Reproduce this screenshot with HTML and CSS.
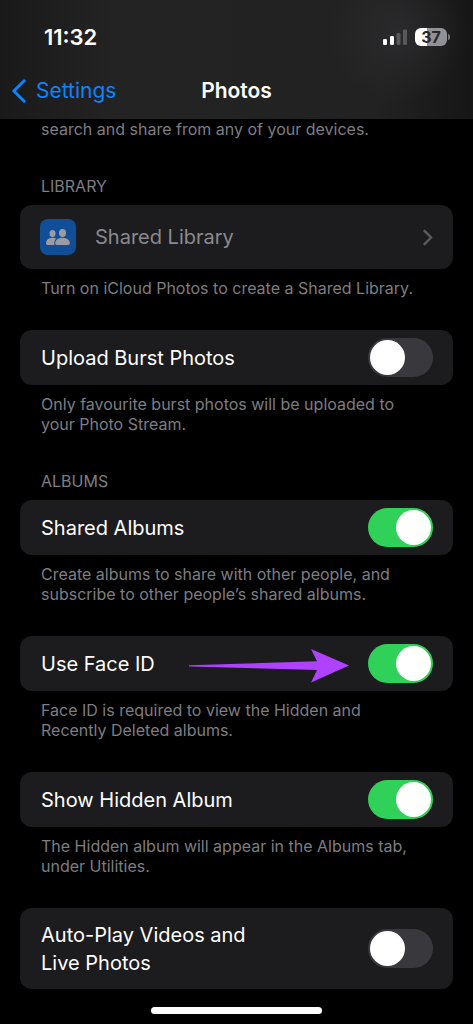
FILE: index.html
```html
<!DOCTYPE html>
<html lang="en-GB">
<head>
<meta charset="utf-8">
<meta name="viewport" content="width=device-width, initial-scale=1">
<title>Photos</title>
<link rel="stylesheet" href="styles.css">
</head>
<body>
<header class="top">
  <div class="status">
    <time class="clock">11:32</time>
    <div class="indicators">
      <svg class="signal" viewBox="0 0 25 17" aria-hidden="true">
        <rect x="0" y="10" width="4" height="6" rx="1.3" fill="#fff"/>
        <rect x="7" y="7" width="4" height="9" rx="1.3" fill="#fff"/>
        <rect x="13.5" y="4" width="4" height="12" rx="1.3" fill="#58585a"/>
        <rect x="20" y="0.5" width="4" height="15.5" rx="1.3" fill="#58585a"/>
      </svg>
      <div class="battery"><span class="level">37</span><span class="tip"></span></div>
    </div>
  </div>
  <nav class="nav">
    <a class="back" href="#settings">
      <svg class="back-icon" viewBox="0 0 14 24" aria-hidden="true"><path d="M12.2 1.8 1.800 12l10.400 10.200" fill="none" stroke="currentColor" stroke-width="3" stroke-linecap="round" stroke-linejoin="round"/></svg>
      <span>Settings</span>
    </a>
    <h1 class="title">Photos</h1>
  </nav>
</header>
<main class="list">
  <p class="note first">search and share from any of your devices.</p>

  <h2 class="heading">LIBRARY</h2>
  <button class="card link" type="button" disabled>
    <svg class="app-icon" viewBox="0 0 36 36" aria-hidden="true">
      <rect width="36" height="36" rx="8" fill="#104f98"/>
      <g fill="#9a9ca1">
        <ellipse cx="12.500" cy="14.5" rx="3" ry="3.5"/>
        <path d="M6 24.2c0-3.300 3-5.400 6.700-5.400 1.300 0 2.500.3 3.500.8-1.200 1.100-1.900 2.500-2 4.900q0 .8.300 1.500H7.500Q6 26 6 24.200Z"/>
        <ellipse cx="22.500" cy="14" rx="3.500" ry="4"/>
        <path d="M15.200 24.200c0-3.300 3.300-5.400 7.300-5.400s7.300 2.100 7.300 5.400q0 1.800-1.500 1.800H16.700q-1.500 0-1.500-1.800Z"/>
      </g>
    </svg>
    <span class="label">Shared Library</span>
    <svg class="chevron" viewBox="0 0 10 17" aria-hidden="true"><path d="m1.500 1.800 6.700 6.700-6.700 6.700" fill="none" stroke="currentColor" stroke-width="2.400" stroke-linecap="round" stroke-linejoin="round"/></svg>
  </button>
  <p class="note">Turn on iCloud Photos to create a Shared Library.</p>

  <label class="card" for="burst"><span class="label">Upload Burst Photos</span><input class="switch" id="burst" type="checkbox" role="switch"></label>
  <p class="note">Only favourite burst photos will be uploaded to<br>your Photo Stream.</p>

  <h2 class="heading">ALBUMS</h2>
  <label class="card" for="shared"><span class="label">Shared Albums</span><input class="switch" id="shared" type="checkbox" role="switch" checked></label>
  <p class="note">Create albums to share with other people, and<br>subscribe to other people’s shared albums.</p>

  <label class="card" for="faceid"><span class="label">Use Face ID</span>
    <svg class="arrow" viewBox="0 0 162 39" aria-hidden="true"><path d="M1 21.300 129 17.300 123 5l38 16.600L123 38.500l6-12.500L1 22.500Z" fill="#ae42ff"/></svg>
    <input class="switch" id="faceid" type="checkbox" role="switch" checked></label>
  <p class="note">Face ID is required to view the Hidden and<br>Recently Deleted albums.</p>

  <label class="card" for="hidden"><span class="label">Show Hidden Album</span><input class="switch" id="hidden" type="checkbox" role="switch" checked></label>
  <p class="note">The Hidden album will appear in the Albums tab,<br>under Utilities.</p>

  <label class="card" for="autoplay"><span class="label">Auto-Play Videos and<br>Live Photos</span><input class="switch" id="autoplay" type="checkbox" role="switch"></label>
</main>
<div class="home"></div>
</body>
</html>
```
FILE: styles.css
```css
* { box-sizing: border-box; }
body {
  margin: 0;
  background: #000;
  color: #fff;
  font-family: Inter, "Liberation Sans", sans-serif;
  font-size: 20px;
  line-height: 28px;
}
h1, h2, p { margin: 0; }
svg { display: block; flex: none; }

.top {
  height: 119px;
  padding-top: 23px;
  background:
    radial-gradient(circle at 84% 28%, #2a2a2c 0, transparent 70px),
    linear-gradient(90deg, #1a1a1b 0, #232323 24%, #222 80%, #161617 100%);
}
.status {
  display: flex;
  justify-content: space-between;
  align-items: center;
  padding: 0 23px 0 44px;
}
.clock { font-size: 22px; font-weight: 600; }
.indicators { display: flex; align-items: center; gap: 7px; }
.signal { width: 25px; height: 17px; }
.battery { display: flex; align-items: center; gap: 1px; }
.level {
  width: 32px;
  border-radius: 6px;
  background: linear-gradient(90deg, #fff 37%, #929296 37%);
  color: #29292b;
  font-size: 16px;
  font-weight: 700;
  line-height: 18px;
  text-align: center;
}
.tip { width: 2px; height: 6px; border-radius: 0 2px 2px 0; background: #77777a; }

.nav {
  display: grid;
  grid-template-columns: 1fr auto 1fr;
  align-items: center;
  margin-top: 26px;
  padding: 0 12px;
  font-size: 21px;
}
.back {
  display: flex;
  align-items: center;
  gap: 10px;
  color: #0a84ff;
  text-decoration: none;
}
.back-icon { width: 14px; height: 24px; }
.title { font-size: 21px; font-weight: 600; line-height: 28px; }

.list { padding: 0 20px; }
.note, .heading {
  padding: 0 21px;
  color: #7d7d83;
  font-size: 16px;
  font-weight: 400;
  line-height: 20px;
}
.heading { margin: 37px 0 9px; }
.note { margin: 10px 0 31px; }
.note.first { margin-top: 0; }
.note:has(+ .heading) { margin-bottom: 36px; }

.card {
  display: flex;
  align-items: center;
  width: 100%;
  min-height: 55px;
  padding: 8px 20px 8px 21px;
  border: 0;
  border-radius: 12px;
  background: #1c1c1e;
  color: #fff;
  font: inherit;
  text-align: left;
}
.card:last-child { min-height: 81px; }
.label { flex: 1; }
.link { min-height: 64px; padding-left: 20px; color: #8a8a8d; }
.app-icon { width: 36px; height: 36px; margin-right: 19px; }
.chevron { width: 10px; height: 17px; color: #5a5a5e; }
.arrow { width: 162px; height: 39px; margin-right: 18px; }

.card + .note { margin-top: 9px; }
.note + .card { margin-top: 32px; }

.switch {
  appearance: none;
  flex: none;
  width: 65px;
  height: 39px;
  margin: 0;
  padding: 2px;
  border-radius: 20px;
  background: #39393d;
}
.switch::before {
  content: "";
  display: block;
  width: 35px;
  height: 35px;
  border-radius: 50%;
  background: #fff;
}
.switch:checked { background: #30d158; }
.switch:checked::before { margin-left: auto; }

.home {
  width: 36%;
  height: 7px;
  margin: 18px auto 10px;
  border-radius: 4px;
  background: #fff;
}
```
